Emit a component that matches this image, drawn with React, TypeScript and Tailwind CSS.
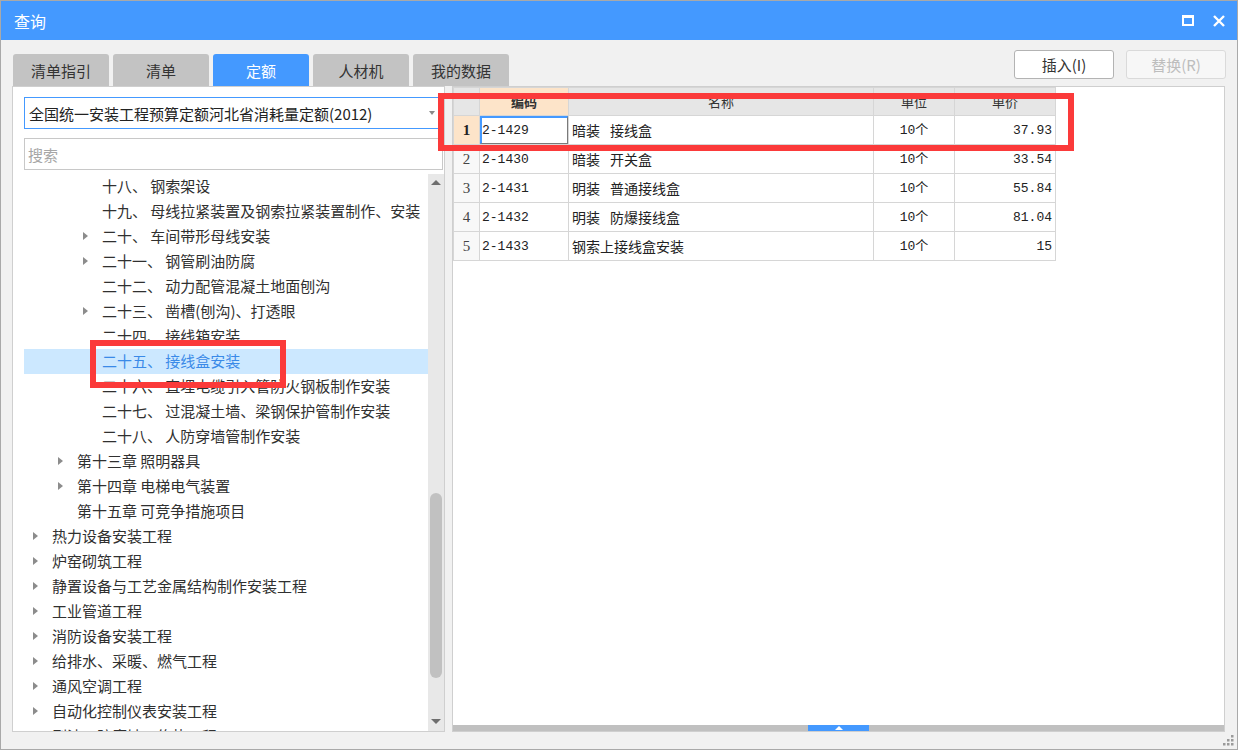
import React from "react";

type Node = { level: number; arrow: boolean; text: string; selected?: boolean };

const tree: Node[] = [
  { level: 2, arrow: false, text: "十八、 钢索架设" },
  { level: 2, arrow: false, text: "十九、 母线拉紧装置及钢索拉紧装置制作、安装" },
  { level: 2, arrow: true, text: "二十、 车间带形母线安装" },
  { level: 2, arrow: true, text: "二十一、 钢管刷油防腐" },
  { level: 2, arrow: false, text: "二十二、 动力配管混凝土地面刨沟" },
  { level: 2, arrow: true, text: "二十三、 凿槽(刨沟)、打透眼" },
  { level: 2, arrow: false, text: "二十四、 接线箱安装" },
  { level: 2, arrow: false, text: "二十五、 接线盒安装", selected: true },
  { level: 2, arrow: false, text: "二十六、 直埋电缆引入管防火钢板制作安装" },
  { level: 2, arrow: false, text: "二十七、 过混凝土墙、梁钢保护管制作安装" },
  { level: 2, arrow: false, text: "二十八、 人防穿墙管制作安装" },
  { level: 1, arrow: true, text: "第十三章 照明器具" },
  { level: 1, arrow: true, text: "第十四章 电梯电气装置" },
  { level: 1, arrow: false, text: "第十五章 可竞争措施项目" },
  { level: 0, arrow: true, text: "热力设备安装工程" },
  { level: 0, arrow: true, text: "炉窑砌筑工程" },
  { level: 0, arrow: true, text: "静置设备与工艺金属结构制作安装工程" },
  { level: 0, arrow: true, text: "工业管道工程" },
  { level: 0, arrow: true, text: "消防设备安装工程" },
  { level: 0, arrow: true, text: "给排水、采暖、燃气工程" },
  { level: 0, arrow: true, text: "通风空调工程" },
  { level: 0, arrow: true, text: "自动化控制仪表安装工程" },
  { level: 0, arrow: true, text: "刷油、防腐蚀、绝热工程" },
];

const items = [
  { code: "2-1429", name: ["暗装", "接线盒"], unit: "10个", price: "37.93" },
  { code: "2-1430", name: ["暗装", "开关盒"], unit: "10个", price: "33.54" },
  { code: "2-1431", name: ["明装", "普通接线盒"], unit: "10个", price: "55.84" },
  { code: "2-1432", name: ["明装", "防爆接线盒"], unit: "10个", price: "81.04" },
  { code: "2-1433", name: ["钢索上接线盒安装"], unit: "10个", price: "15" },
];

const tabs = ["清单指引", "清单", "定额", "人材机", "我的数据"];

// padding per tree level (text start)
const indent = ["pl-[28px]", "pl-[53px]", "pl-[78px]"];
const arrowLeft = ["left-[9px]", "left-[34px]", "left-[59px]"];

const cols = "grid grid-cols-[26px_89px_305px_81px_101px]";
const cell = "border-r border-b border-[#d6d6d6] flex items-center";
const mono = "font-['Liberation_Mono','Noto_Sans_CJK_SC',monospace] text-[13px]";

export default function App() {
  return (
    <div className="relative w-[1238px] h-[750px] overflow-hidden border border-[#a9a9a9] bg-[#f1f1f1] flex flex-col font-['Noto_Sans_CJK_SC',sans-serif] text-[#303030]">
      {/* title bar */}
      <div className="h-[39px] shrink-0 bg-[#4499ff] flex items-center justify-between pl-[13px] pr-[12px]">
        <span className="text-white text-[16px] leading-none">查询</span>
        <div className="flex items-center gap-[19px]">
          <svg width="12" height="11" viewBox="0 0 12 11">
            <rect x="1" y="1.5" width="10" height="8.5" fill="none" stroke="#fff" strokeWidth="2" />
            <rect x="0" y="0" width="12" height="3" fill="#fff" />
          </svg>
          <svg width="12" height="12" viewBox="0 0 12 12">
            <path d="M1 1L11 11M11 1L1 11" stroke="#fff" strokeWidth="2.4" />
          </svg>
        </div>
      </div>

      {/* tabs + buttons */}
      <div className="h-[46px] shrink-0 flex justify-between pl-[12px] pr-[11px]">
        <div className="self-end flex gap-[4px]">
          {tabs.map((t) => (
            <div
              key={t}
              className={`w-[96px] h-[32px] rounded-t-[3px] flex items-center justify-center text-[15px] leading-none ${
                t === "定额" ? "bg-[#4499ff] text-white" : "bg-[#c3c3c3] text-[#333]"
              }`}
            >
              {t}
            </div>
          ))}
        </div>
        <div className="mt-[10px] flex gap-[12px]">
          <div className="w-[100px] h-[29px] rounded-[3px] border border-[#b3b3b3] bg-white flex items-center justify-center text-[15px] leading-none text-[#333]">
            插入(I)
          </div>
          <div className="w-[100px] h-[29px] rounded-[3px] border border-[#dadada] bg-[#f7f7f7] flex items-center justify-center text-[15px] leading-none text-[#bdbdbd]">
            替换(R)
          </div>
        </div>
      </div>

      {/* main */}
      <div className="h-[646px] shrink-0 flex gap-[7px] pl-[11px]">
        {/* left panel */}
        <div className="w-[433px] border border-[#cfcfcf] bg-white flex flex-col">
          <div className="mt-[10px] ml-[11px] w-[416px] h-[32px] border border-[#4499ff] flex items-center justify-between pl-[4px] pr-[4px]">
            <span className="text-[15px] leading-none text-[#222]">全国统一安装工程预算定额河北省消耗量定额(2012)</span>
            <span className="w-0 h-0 border-x-[3px] border-x-transparent border-t-[4px] border-t-[#8a8a8a]" />
          </div>
          <div className="mt-[9px] ml-[11px] mr-[1px] h-[32px] border border-[#c8c8c8] flex items-center pl-[3px]">
            <span className="text-[15px] leading-none text-[#a6a6a6]">搜索</span>
          </div>
          <div className="mt-[4px] flex-1 min-h-0 flex">
            <div className="ml-[11px] flex-1 overflow-hidden">
              {tree.map((n, i) => (
                <div
                  key={i}
                  className={`relative h-[25px] flex items-center pb-[2px] whitespace-nowrap text-[15px] leading-none ${indent[n.level]} ${
                    n.selected ? "bg-[#cce8ff] text-[#3a8ae8]" : ""
                  }`}
                >
                  {n.arrow && (
                    <span
                      className={`absolute top-[8px] ${arrowLeft[n.level]} w-0 h-0 border-y-[4px] border-y-transparent border-l-[5px] border-l-[#8c8c8c]`}
                    />
                  )}
                  {n.text}
                </div>
              ))}
            </div>
            {/* vertical scrollbar */}
            <div className="w-[16px] bg-[#e8e8e8] flex flex-col items-center">
              <div className="h-[16px] flex items-center justify-center">
                <span className="w-0 h-0 border-x-[5px] border-x-transparent border-b-[5px] border-b-[#6e6e6e]" />
              </div>
              <div className="mt-[303px] w-[12px] h-[185px] rounded-full bg-[#c1c1c1]" />
              <div className="flex-1" />
              <div className="h-[16px] flex items-start justify-center pt-[4px]">
                <span className="w-0 h-0 border-x-[5px] border-x-transparent border-t-[5px] border-t-[#6e6e6e]" />
              </div>
            </div>
          </div>
        </div>

        {/* right panel */}
        <div className="w-[773px] border border-[#cfcfcf] bg-white flex flex-col">
          <div className="flex-1 min-h-0">
            <div className="w-[603px] border-l border-t border-[#d6d6d6]">
              <div className={`${cols} h-[28px] text-[13px] leading-none text-[#333]`}>
                <div className={`${cell} bg-[#e6e6e6]`} />
                <div className={`${cell} justify-center bg-[#fde4c9] font-bold`}>编码</div>
                <div className={`${cell} justify-center bg-[#e6e6e6]`}>名称</div>
                <div className={`${cell} justify-center bg-[#e6e6e6]`}>单位</div>
                <div className={`${cell} justify-center bg-[#e6e6e6]`}>单价</div>
              </div>
              {items.map((r, i) => (
                <div key={r.code} className={`${cols} h-[29px] leading-none text-[#222]`}>
                  <div
                    className={`${cell} justify-center font-['Liberation_Serif',serif] text-[15px] ${
                      i === 0 ? "bg-[#fde4c9] font-bold" : "bg-[#f8f8f8] text-[#444]"
                    }`}
                  >
                    {i + 1}
                  </div>
                  <div className={`${cell} relative pl-[2px] ${mono}`}>
                    {i === 0 && (
                      <span className="absolute inset-0 border-l-2 border-t-2 border-[#4499ff] border-r border-b border-r-[#7a7a7a] border-b-[#7a7a7a]" />
                    )}
                    {r.code}
                  </div>
                  <div className={`${cell} gap-[10px] pl-[3px] text-[14px]`}>
                    {r.name.map((p) => (
                      <span key={p}>{p}</span>
                    ))}
                  </div>
                  <div className={`${cell} justify-center ${mono}`}>{r.unit}</div>
                  <div className={`${cell} justify-end pr-[3px] ${mono}`}>{r.price}</div>
                </div>
              ))}
            </div>
          </div>
          {/* bottom splitter bar */}
          <div className="h-[6px] bg-[#c0c0c0] flex">
            <div className="ml-[355px] w-[61px] h-[6px] bg-[#4499ff] flex items-center justify-center">
              <span className="w-0 h-0 border-x-[4px] border-x-transparent border-b-[4px] border-b-white" />
            </div>
          </div>
        </div>
      </div>

      {/* resize grip */}
      <svg className="absolute right-[3px] bottom-[3px]" width="11" height="11" viewBox="0 0 11 11">
        {[
          [8, 0],
          [8, 4],
          [4, 4],
          [8, 8],
          [4, 8],
          [0, 8],
        ].map(([x, y], i) => (
          <rect key={i} x={x} y={y} width="2.5" height="2.5" fill="#9a9a9a" />
        ))}
      </svg>

      {/* red highlight boxes */}
      <div className="absolute left-[437px] top-[92px] w-[636px] h-[58px] border-[6px] border-[#fb3a3a]" />
      <div className="absolute left-[89px] top-[339px] w-[196px] h-[48px] border-[6px] border-[#fb3a3a]" />
    </div>
  );
}
